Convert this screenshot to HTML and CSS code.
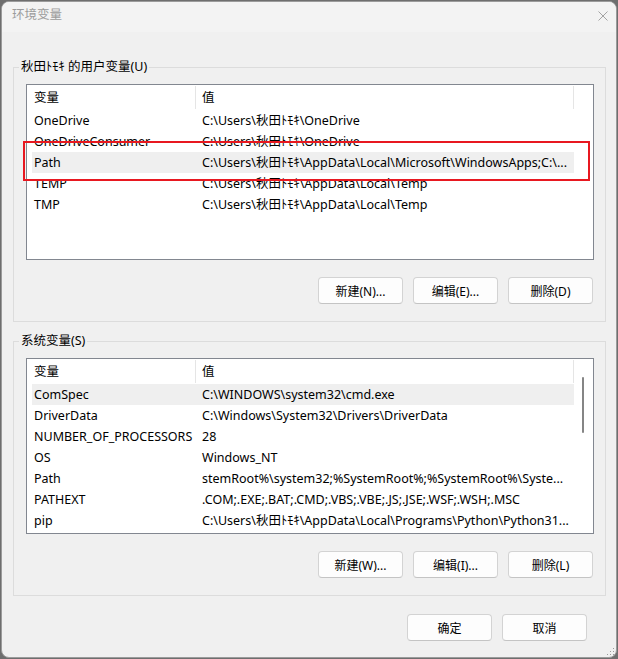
FILE: index.html
```html
<!DOCTYPE html>
<html lang="zh-CN">
<head>
    <meta charset="UTF-8">
    <meta name="viewport" content="width=device-width, initial-scale=1.0">
    <title>环境变量</title>
    <link rel="stylesheet" href="styles.css">
</head>
<body>
    <div class="window">
        <div class="titlebar">
            <span class="title">环境变量</span>
            <svg class="close-icon" width="10" height="10" viewBox="0 0 10 10">
                <path d="M0.5 0.5 L9.5 9.5 M9.5 0.5 L0.5 9.5" stroke="#a3a3a3" stroke-width="1" fill="none"/>
            </svg>
        </div>

        <div class="content">
            <!-- 用户变量 -->
            <fieldset class="group">
                <legend>秋田ﾄﾓｷ 的用户变量(U)</legend>
                <div class="listview">
                    <div class="lv-body">
                        <div class="lv-header">
                            <span class="hd-name">变量</span>
                            <span class="hd-value">值</span>
                        </div>
                        <div class="lv-row"><span class="cell-name">OneDrive</span><span class="cell-value">C:\Users\秋田ﾄﾓｷ\OneDrive</span></div>
                        <div class="lv-row"><span class="cell-name">OneDriveConsumer</span><span class="cell-value">C:\Users\秋田ﾄﾓｷ\OneDrive</span></div>
                        <div class="lv-row selected"><span class="cell-name">Path</span><span class="cell-value">C:\Users\秋田ﾄﾓｷ\AppData\Local\Microsoft\WindowsApps;C:\...</span></div>
                        <div class="lv-row"><span class="cell-name">TEMP</span><span class="cell-value">C:\Users\秋田ﾄﾓｷ\AppData\Local\Temp</span></div>
                        <div class="lv-row"><span class="cell-name">TMP</span><span class="cell-value">C:\Users\秋田ﾄﾓｷ\AppData\Local\Temp</span></div>
                    </div>
                </div>
                <div class="btn-row">
                    <button class="btn">新建(N)...</button>
                    <button class="btn">编辑(E)...</button>
                    <button class="btn">删除(D)</button>
                </div>
            </fieldset>

            <!-- 系统变量 -->
            <fieldset class="group group-system">
                <legend>系统变量(S)</legend>
                <div class="listview">
                    <div class="lv-body">
                        <div class="lv-header">
                            <span class="hd-name">变量</span>
                            <span class="hd-value">值</span>
                        </div>
                        <div class="lv-row selected"><span class="cell-name">ComSpec</span><span class="cell-value">C:\WINDOWS\system32\cmd.exe</span></div>
                        <div class="lv-row"><span class="cell-name">DriverData</span><span class="cell-value">C:\Windows\System32\Drivers\DriverData</span></div>
                        <div class="lv-row"><span class="cell-name">NUMBER_OF_PROCESSORS</span><span class="cell-value">28</span></div>
                        <div class="lv-row"><span class="cell-name">OS</span><span class="cell-value">Windows_NT</span></div>
                        <div class="lv-row"><span class="cell-name">Path</span><span class="cell-value">stemRoot%\system32;%SystemRoot%;%SystemRoot%\Syste...</span></div>
                        <div class="lv-row"><span class="cell-name">PATHEXT</span><span class="cell-value">.COM;.EXE;.BAT;.CMD;.VBS;.VBE;.JS;.JSE;.WSF;.WSH;.MSC</span></div>
                        <div class="lv-row"><span class="cell-name">pip</span><span class="cell-value">C:\Users\秋田ﾄﾓｷ\AppData\Local\Programs\Python\Python31...</span></div>
                    </div>
                    <div class="scrollbar">
                        <div class="scroll-thumb"></div>
                    </div>
                </div>
                <div class="btn-row">
                    <button class="btn">新建(W)...</button>
                    <button class="btn">编辑(I)...</button>
                    <button class="btn">删除(L)</button>
                </div>
            </fieldset>

            <div class="dialog-buttons">
                <button class="btn">确定</button>
                <button class="btn">取消</button>
            </div>
        </div>

        <!-- 标注框 -->
        <div class="highlight"></div>

        <svg class="grip" width="9" height="9" viewBox="0 0 9 9">
            <rect x="7" y="1" width="1" height="1" fill="#9a9a9a"/>
            <rect x="4" y="4" width="1" height="1" fill="#9a9a9a"/>
            <rect x="7" y="4" width="1" height="1" fill="#9a9a9a"/>
            <rect x="1" y="7" width="1" height="1" fill="#9a9a9a"/>
            <rect x="4" y="7" width="1" height="1" fill="#9a9a9a"/>
            <rect x="7" y="7" width="1" height="1" fill="#9a9a9a"/>
        </svg>
    </div>
</body>
</html>
```

FILE: styles.css
```css
:root {
    --window-bg: #f0f0f0;
    --title-bg: #f3f3f3;
    --group-border: #dcdcdc;
    --list-border: #828790;
    --header-line: #e5e5e5;
    --selected-bg: #efefef;
    --text-color: #000;
}

* {
    box-sizing: border-box;
}

body {
    margin: 0;
    background-color: #6e6e6e;
    font-family: "Noto Sans", "Noto Sans CJK SC", sans-serif;
    font-size: 12.5px;
    color: var(--text-color);
}

.window {
    position: relative;
    margin: 1px 0 0 1px;
    width: 616px;
    height: 657px;
    background-color: var(--window-bg);
    border: 1px solid #9b9b9b;
    border-radius: 8px;
    overflow: hidden;
}

.titlebar {
    height: 30px;
    display: flex;
    justify-content: space-between;
    align-items: flex-start;
    background-color: var(--title-bg);
}

.title {
    padding: 5px 0 0 10px;
    line-height: 16px;
    color: #9b9b9b;
}

.close-icon {
    margin: 9px 8px 0 0;
}

.content {
    padding: 0 10px 0 11px;
}

.group {
    margin: 27px 0 0 0;
    padding: 9px 11px 17px 7px;
    border: 1px solid var(--group-border);
    min-width: 0;
}

.group-system {
    margin-top: 11px;
}

.group legend {
    margin-left: -2px;
    padding: 0 2px;
    line-height: 16px;
}

.listview {
    display: flex;
    margin-left: 5px;
    width: 568px;
    height: 176px;
    background-color: #fff;
    border: 1px solid var(--list-border);
}

.lv-body {
    width: 547px;
    padding-left: 5px;
}

.lv-header {
    display: grid;
    grid-template-columns: 164px 378px;
    height: 25px;
    align-items: center;
}

.hd-name,
.hd-value {
    line-height: 23px;
    border-right: 1px solid var(--header-line);
}

.hd-name {
    padding-left: 2px;
}

.hd-value {
    padding-left: 6px;
}

.lv-row {
    display: grid;
    grid-template-columns: 163px 379px;
    height: 21px;
    line-height: 21px;
    white-space: nowrap;
}

.lv-row.selected {
    background-color: var(--selected-bg);
}

.cell-name {
    padding-left: 2px;
    overflow: hidden;
}

.cell-value {
    padding-left: 7px;
    overflow: hidden;
}

.scrollbar {
    flex: 1;
    padding: 18px 0 0 8px;
}

.scroll-thumb {
    width: 2px;
    height: 56px;
    border-radius: 1px;
    background-color: #858585;
}

.btn-row {
    display: flex;
    justify-content: flex-end;
    gap: 10px;
    margin: 17px 1px 0 0;
}

.btn {
    width: 85px;
    height: 27px;
    padding: 0;
    font-family: inherit;
    font-size: 12px;
    color: var(--text-color);
    background-color: #fdfdfd;
    border: 1px solid #d3d3d3;
    border-bottom-color: #c4c4c4;
    border-radius: 4px;
}

.dialog-buttons {
    display: flex;
    justify-content: flex-end;
    gap: 10px;
    margin: 18px 19px 0 0;
}

.highlight {
    position: absolute;
    left: 21px;
    top: 139px;
    width: 567px;
    height: 40px;
    border: 2px solid #e81820;
}

.grip {
    position: absolute;
    right: 1px;
    bottom: 1px;
}
```
